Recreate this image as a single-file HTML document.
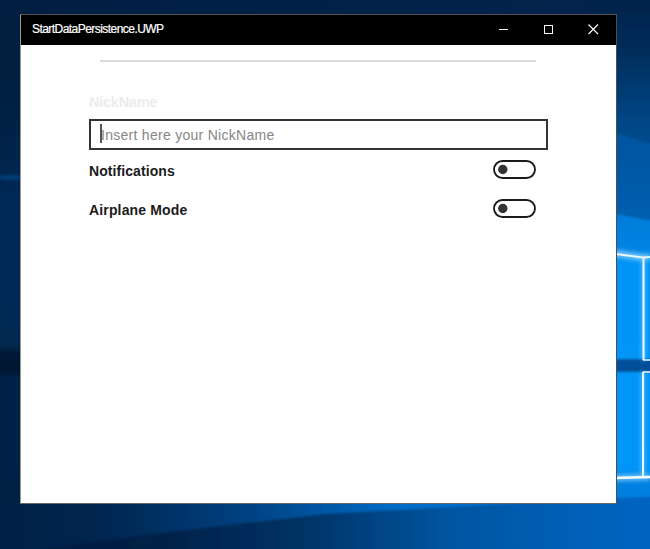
<!DOCTYPE html>
<html>
<head>
<meta charset="utf-8">
<style>
html,body{margin:0;padding:0;}
body{width:650px;height:549px;position:relative;overflow:hidden;font-family:"Liberation Sans",sans-serif;background:#02285a;}
.bg{position:absolute;left:0;top:0;width:650px;height:549px;}
.win{position:absolute;left:20px;top:14px;width:597px;height:490px;background:#fff;box-sizing:border-box;border:1px solid #555250;border-left-color:#9c9792;border-bottom-color:#6a6460;border-right-color:#4e4e4e;}
.title{position:absolute;left:0;top:0;width:595px;height:30px;background:#000;}
.ttext{position:absolute;left:11px;top:7px;color:#fff;font-size:12px;line-height:14px;letter-spacing:-0.55px;white-space:nowrap;-webkit-text-stroke:0.2px #fff;}
.abs{position:absolute;white-space:nowrap;}
.hr{position:absolute;left:100px;top:60px;width:436px;height:2px;background:#dcdcdc;}
.lbl{font-size:14px;font-weight:bold;line-height:16px;color:#1c1c1c;}
.tb{position:absolute;left:89px;top:119px;width:459px;height:31px;box-sizing:border-box;border:2px solid #333;}
.ph{font-size:14px;line-height:16px;color:#868686;letter-spacing:0.28px;}
.caret{position:absolute;left:100px;top:124px;width:2px;height:19px;background:#555;}
.tg{position:absolute;left:493px;width:44px;height:20px;box-sizing:border-box;border:2px solid #111;border-radius:10px;}
.knob{position:absolute;left:3px;top:3px;width:10px;height:10px;border-radius:50%;background:#333;}
</style>
</head>
<body>
<svg class="bg" width="650" height="549" viewBox="0 0 650 549">
  <defs>
    <linearGradient id="gl" x1="0" y1="0" x2="0" y2="549" gradientUnits="userSpaceOnUse"><stop offset="0.000" stop-color="rgb(1,30,62)"/><stop offset="0.182" stop-color="rgb(0,32,65)"/><stop offset="0.273" stop-color="rgb(0,35,72)"/><stop offset="0.364" stop-color="rgb(0,41,86)"/><stop offset="0.546" stop-color="rgb(0,42,85)"/><stop offset="0.628" stop-color="rgb(0,40,80)"/><stop offset="0.643" stop-color="rgb(0,25,54)"/><stop offset="0.676" stop-color="rgb(0,23,51)"/><stop offset="0.690" stop-color="rgb(0,33,70)"/><stop offset="0.820" stop-color="rgb(0,33,70)"/><stop offset="1.000" stop-color="rgb(0,32,66)"/></linearGradient>
    <linearGradient id="gt" x1="0" y1="0" x2="1" y2="0">
      <stop offset="0" stop-color="#011e42"/>
      <stop offset="1" stop-color="#02244c"/>
    </linearGradient>
    <linearGradient id="gr1" x1="0" y1="0" x2="0" y2="143" gradientUnits="userSpaceOnUse">
      <stop offset="0" stop-color="rgb(1,34,74)"/>
      <stop offset="0.35" stop-color="rgb(0,45,90)"/>
      <stop offset="0.8" stop-color="rgb(0,68,130)"/>
      <stop offset="1" stop-color="rgb(0,74,140)"/>
    </linearGradient>
    <linearGradient id="gr2" x1="0" y1="130" x2="0" y2="220" gradientUnits="userSpaceOnUse">
      <stop offset="0" stop-color="rgb(0,84,158)"/>
      <stop offset="1" stop-color="rgb(0,95,176)"/>
    </linearGradient>
    <linearGradient id="gr3" x1="0" y1="209" x2="0" y2="549" gradientUnits="userSpaceOnUse">
      <stop offset="0" stop-color="rgb(0,122,218)"/>
      <stop offset="0.12" stop-color="rgb(0,132,228)"/>
      <stop offset="0.15" stop-color="rgb(0,148,246)"/>
      <stop offset="0.76" stop-color="rgb(0,150,248)"/>
      <stop offset="0.8" stop-color="rgb(0,130,226)"/>
      <stop offset="1" stop-color="rgb(0,112,212)"/>
    </linearGradient>
    <linearGradient id="gbu" x1="0" y1="0" x2="650" y2="0" gradientUnits="userSpaceOnUse">
      <stop offset="0" stop-color="rgb(0,33,70)"/>
      <stop offset="0.154" stop-color="rgb(0,37,78)"/>
      <stop offset="0.385" stop-color="rgb(0,66,130)"/>
      <stop offset="0.615" stop-color="rgb(0,108,200)"/>
      <stop offset="1" stop-color="rgb(5,112,214)"/>
    </linearGradient>
    <linearGradient id="gbd" x1="0" y1="0" x2="650" y2="0" gradientUnits="userSpaceOnUse">
      <stop offset="0" stop-color="rgb(0,30,62)"/>
      <stop offset="0.23" stop-color="rgb(0,32,70)"/>
      <stop offset="0.46" stop-color="rgb(0,50,100)"/>
      <stop offset="0.69" stop-color="rgb(4,85,160)"/>
      <stop offset="0.92" stop-color="rgb(0,98,188)"/>
      <stop offset="1" stop-color="rgb(0,100,192)"/>
    </linearGradient>
    <filter id="bl" x="-50%" y="-50%" width="200%" height="200%"><feGaussianBlur stdDeviation="0.6"/></filter><filter id="bl3" x="-50%" y="-50%" width="200%" height="200%"><feGaussianBlur stdDeviation="2"/></filter><filter id="bl2" x="-50%" y="-50%" width="200%" height="200%"><feGaussianBlur stdDeviation="1.2"/></filter>
  </defs>
  <rect width="650" height="549" fill="url(#gt)"/>
  <rect x="0" y="0" width="21" height="549" fill="url(#gl)"/>
  
  <rect x="0" y="175" width="21" height="5" fill="rgb(0,75,140)" opacity="0.6" filter="url(#bl2)"/>
  <rect x="0" y="0" width="650" height="14" fill="url(#gt)"/>
  <g filter="url(#bl2)">
    <polygon points="590,0 680,0 680,151 650,143 590,125" fill="url(#gr1)"/>
    <polygon points="590,125 650,143 680,151 680,225 650,220 590,209" fill="url(#gr2)"/>
    <polygon points="590,209 650,220 680,225 680,560 590,560" fill="url(#gr3)"/>
    <rect x="590" y="359" width="90" height="13" fill="rgb(0,80,152)"/>
  </g>
  <polygon points="0,503 650,497 650,549 42,549 0,549" fill="url(#gbu)"/>
  <polygon points="42,549 160,533 325,514 490,505 650,497 660,497 660,560 42,560" fill="url(#gbd)" filter="url(#bl2)"/>
  <g filter="url(#bl3)" opacity="0.6">
    <polyline points="612,253 643,257.5 650,257" fill="none" stroke="#bfe8ff" stroke-width="7"/>
    <line x1="612" y1="478" x2="650" y2="477" stroke="#bfe8ff" stroke-width="6"/>
    <line x1="643.5" y1="257" x2="643.5" y2="360" stroke="#8fd0ff" stroke-width="4"/>
    <line x1="643" y1="372" x2="643" y2="478" stroke="#8fd0ff" stroke-width="4"/>
  </g>
  <g filter="url(#bl)">
    <polyline points="612,253.5 643,257.5 650,257" fill="none" stroke="#e6f6ff" stroke-width="2.2"/>
    <line x1="643.5" y1="257" x2="643.5" y2="360" stroke="#eaf8ff" stroke-width="2"/>
    <line x1="643" y1="360" x2="650" y2="360" stroke="#eaf8ff" stroke-width="1.5"/>
    <line x1="643" y1="372" x2="650" y2="372" stroke="#eaf8ff" stroke-width="1.5"/>
    <line x1="643" y1="372" x2="643" y2="478" stroke="#eaf8ff" stroke-width="2"/>
    <line x1="612" y1="478" x2="650" y2="477" stroke="#f4fbff" stroke-width="2.5"/>
  </g>
</svg>
<div class="abs" style="left:0;top:0;width:650px;height:549px;">
  <div class="win">
    <div class="title">
      <div class="ttext">StartDataPersistence.UWP</div>
    </div>
  </div>
</div>
<svg style="position:absolute;left:0;top:0" width="650" height="60">
  <line x1="499" y1="29.5" x2="508" y2="29.5" stroke="#fff" stroke-width="1"/>
  <rect x="544.5" y="25.5" width="8" height="8" fill="none" stroke="#fff" stroke-width="1"/>
  <path d="M588.5 24.5 L598 34 M598 24.5 L588.5 34" stroke="#fff" stroke-width="1.1" fill="none"/>
</svg>
<div class="hr"></div>
<div class="abs lbl" style="left:89px;top:94px;color:#ececec;font-size:14.5px;letter-spacing:-0.25px;">NickName</div>
<div class="tb"></div>
<div class="abs ph" style="left:101px;top:127px;">Insert here your NickName</div>
<div class="caret"></div>
<div class="abs lbl" style="left:89px;top:163px;letter-spacing:0.08px;">Notifications</div>
<div class="abs lbl" style="left:89px;top:202px;letter-spacing:0.15px;">Airplane Mode</div>
<svg style="position:absolute;left:0;top:0" width="650" height="260">
  <rect x="494" y="161" width="41" height="17" rx="8.5" fill="none" stroke="#1a1a1a" stroke-width="1.85"/>
  <circle cx="502.8" cy="169.5" r="4.7" fill="#333"/>
  <rect x="494" y="200" width="41" height="17" rx="8.5" fill="none" stroke="#1a1a1a" stroke-width="1.85"/>
  <circle cx="502.8" cy="208.5" r="4.7" fill="#333"/>
</svg>
</body>
</html>
